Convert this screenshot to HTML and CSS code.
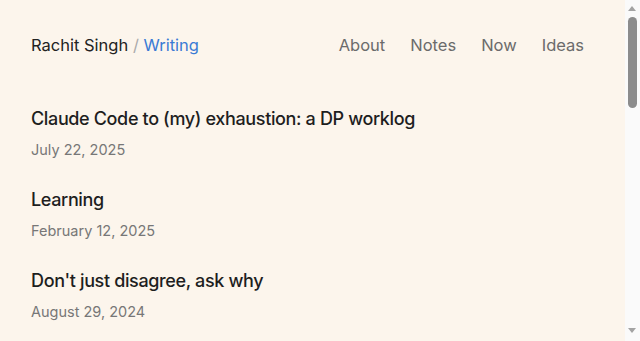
FILE: index.html
```html
<!DOCTYPE html>
<html lang="en">
<head>
    <meta charset="UTF-8">
    <title>Writing - Rachit Singh</title>
    <link rel="stylesheet" href="styles.css">
</head>
<body>
    <header class="header">
        <div class="crumbs">
            <a class="home" href="#">Rachit Singh</a>
            <span class="sep">/</span>
            <a class="current" href="#">Writing</a>
        </div>
        <nav class="nav">
            <a href="#">About</a>
            <a href="#">Notes</a>
            <a href="#">Now</a>
            <a href="#">Ideas</a>
        </nav>
    </header>

    <main class="posts">
        <article class="post">
            <a class="post-title" href="#">Claude Code to (my) exhaustion: a DP worklog</a>
            <div class="post-date">July 22, 2025</div>
        </article>
        <article class="post">
            <a class="post-title" href="#">Learning</a>
            <div class="post-date">February 12, 2025</div>
        </article>
        <article class="post">
            <a class="post-title" href="#">Don't just disagree, ask why</a>
            <div class="post-date">August 29, 2024</div>
        </article>
        <article class="post">
            <a class="post-title" href="#">Notes on reading papers</a>
            <div class="post-date">March 3, 2024</div>
        </article>
        <article class="post">
            <a class="post-title" href="#">Small tools</a>
            <div class="post-date">November 18, 2023</div>
        </article>
    </main>

    <!-- page scrollbar -->
    <div class="scrollbar">
        <span class="arrow up"></span>
        <span class="thumb"></span>
        <span class="arrow down"></span>
    </div>
</body>
</html>
```

FILE: styles.css
```css
html
{
    background: #fcf5ec;
}
body
{
    margin: 0;
    padding: 0 56px 0 31px;
    font-family: Inter, "Noto Sans", sans-serif;
    color: #222;
}
a
{
    text-decoration: none;
    color: inherit;
}
.header
{
    display: flex;
    justify-content: space-between;
    align-items: center;
    height: 90px;
    font-size: 16.5px;
}
.crumbs
{
    color: #222;
}
.sep
{
    color: #aaa;
}
.current
{
    color: #3a7bd5;
}
.nav
{
    display: flex;
    gap: 0 25px;
}
.nav a
{
    color: #6b6b6b;
}
.posts
{
    padding-top: 16px;
}
.post
{
    margin-bottom: 28px;
}
.post-title
{
    display: block;
    font-size: 18px;
    letter-spacing: -0.02em;
    font-weight: 500;
    line-height: 26px;
    color: #1e1e1e;
}
.post-date
{
    margin-top: 9px;
    font-size: 14.5px;
    line-height: 18px;
    color: #777;
}
.scrollbar
{
    position: fixed;
    top: 0;
    right: 0;
    width: 15px;
    height: 100%;
    background: #fafafa;
}
.arrow
{
    position: absolute;
    left: 3px;
    width: 0;
    height: 0;
    border-left: 4.5px solid transparent;
    border-right: 4.5px solid transparent;
}
.up
{
    top: 6px;
    border-bottom: 5px solid #a3a3a3;
}
.down
{
    bottom: 8px;
    border-top: 5px solid #a3a3a3;
}
.thumb
{
    position: absolute;
    top: 17px;
    left: 3px;
    width: 9px;
    height: 91px;
    border-radius: 5px;
    background: #8c8c8c;
}
```
